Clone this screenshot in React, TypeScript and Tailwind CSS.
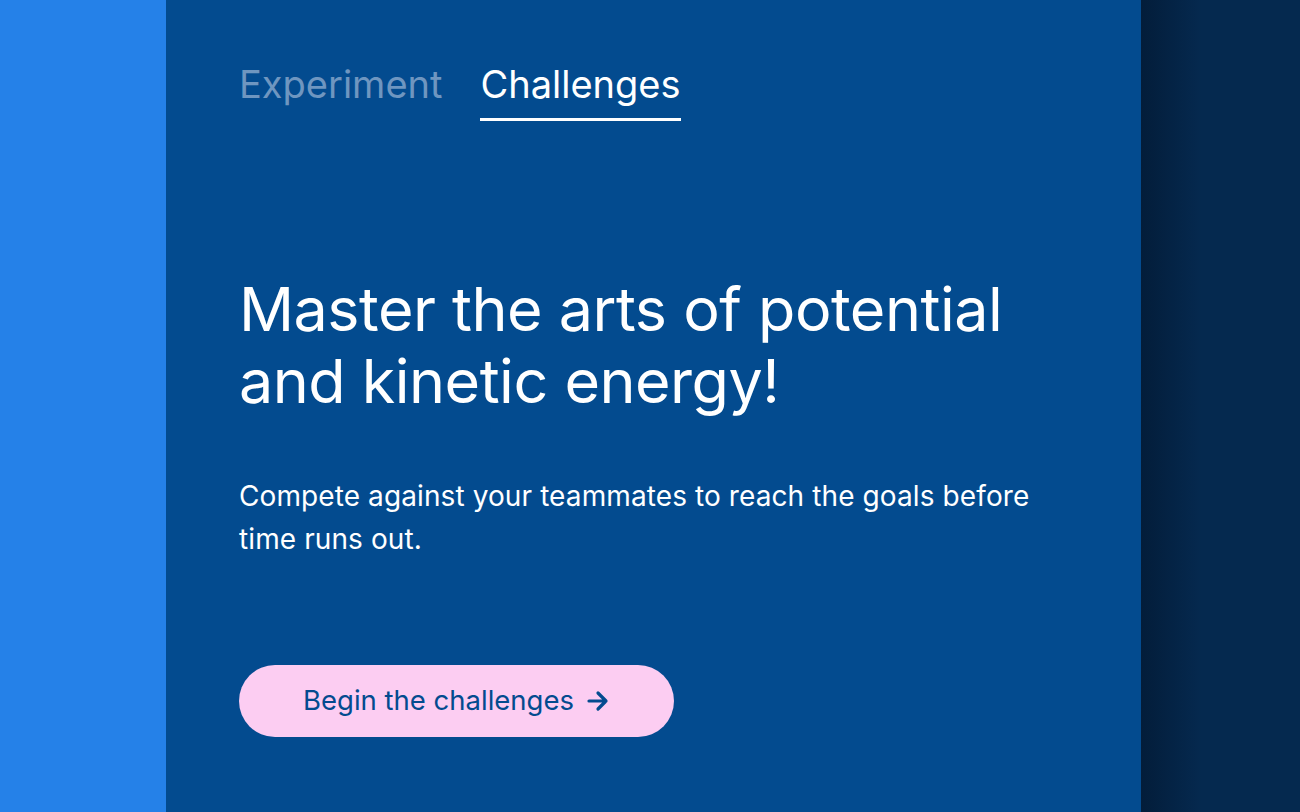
import React, { useState } from "react";

const tabs = ["Experiment", "Challenges"];

export default function App() {
  const [active, setActive] = useState<string>("Challenges");

  return (
    <div className="flex h-[812px] w-full overflow-hidden font-['Inter',sans-serif]">
      <div className="w-[166px] shrink-0 bg-[#2581e8]" />
      <div className="flex w-[975px] shrink-0 flex-col bg-[#034b8f] pl-[73px] pt-[60px]">
        <div className="flex gap-[38px]">
          {tabs.map((t) => (
            <button
              key={t}
              onClick={() => setActive(t)}
              className={
                t === active
                  ? "border-b-[3px] border-white pb-[10px] text-[38px] leading-[48px] text-white"
                  : "border-b-[3px] border-transparent pb-[10px] text-[38px] leading-[48px] text-[#6f96c0]"
              }
            >
              {t}
            </button>
          ))}
        </div>
        <h1 className="mt-[152px] text-[61px] leading-[72px] tracking-[-0.5px] text-white">
          Master the arts of potential
          <br />
          and kinetic energy!
        </h1>
        <p className="mt-[58px] w-[810px] text-[28px] leading-[43px] tracking-[0.1px] text-white">
          Compete against your teammates to reach the goals before time runs out.
        </p>
        <button className="mt-[104px] flex h-[72px] w-[435px] items-center justify-center gap-[12px] rounded-full bg-[#fccdf2] text-[27.5px] text-[#034b8f]">
          Begin the challenges
          <svg width="24" height="22" viewBox="0 0 24 22" fill="none" stroke="#034b8f" strokeWidth="3.2" strokeLinecap="round" strokeLinejoin="round">
            <path d="M3 11h17M12 3l8 8-8 8" />
          </svg>
        </button>
      </div>
      <div className="relative flex-1 bg-[#05294f]">
        <div className="absolute inset-y-0 left-0 w-[60px] bg-gradient-to-r from-[#031d3a] to-transparent" />
      </div>
    </div>
  );
}
